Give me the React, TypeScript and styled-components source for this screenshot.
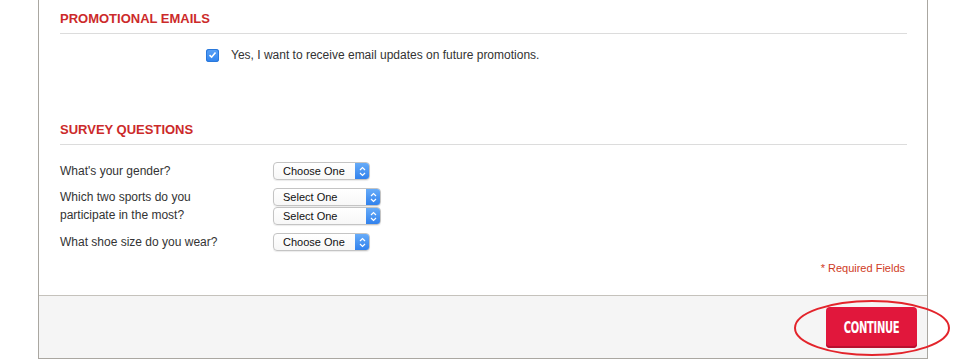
import React from "react";
import styled, { createGlobalStyle } from "styled-components";

const GlobalStyle = createGlobalStyle`
  body {
    margin: 0;
    background: #fff;
    font-family: "Liberation Sans", Arial, Helvetica, sans-serif;
    color: #333;
  }
`;

const Panel = styled.div`
  box-sizing: border-box;
  width: 890px;
  margin-left: 38px;
  border-left: 1px solid #aaa7a1;
  border-right: 1px solid #aaa7a1;
  border-bottom: 1px solid #aaa7a1;
`;

const Body = styled.div`
  padding: 11px 20px 20px 21px;
  background: #fff;
`;

const SectionTitle = styled.h2<{ $gap?: number }>`
  margin: ${(p) => p.$gap ?? 0}px 0 0;
  padding-bottom: 6px;
  border-bottom: 1px solid #dcdcdc;
  font-size: 13px;
  line-height: 16px;
  font-weight: bold;
  text-transform: uppercase;
  color: #cc2a2a;
`;

const OptInRow = styled.label`
  display: flex;
  align-items: center;
  gap: 12px;
  height: 18px;
  margin: 12px 0 0 146px;
  font-size: 12px;
`;

const CheckBox = styled.span`
  display: inline-flex;
  align-items: center;
  justify-content: center;
  width: 13px;
  height: 13px;
  border-radius: 3px;
  background: linear-gradient(#5aa2f7, #2f83ee);
  box-shadow: inset 0 0 0 1px #2a78da;
`;

const Questions = styled.div`
  display: grid;
  grid-template-columns: 213px auto;
  row-gap: 8px;
  margin-top: 17px;
`;

const Question = styled.div`
  font-size: 12px;
  line-height: 18px;
  width: 160px;
`;

const SelectStack = styled.div`
  display: flex;
  flex-direction: column;
  gap: 1px;
`;

const Select = styled.div<{ $width: number }>`
  box-sizing: border-box;
  display: flex;
  align-items: center;
  justify-content: space-between;
  width: ${(p) => p.$width}px;
  height: 18px;
  padding-left: 9px;
  border: 1px solid #c4c4c4;
  border-radius: 4px;
  background: linear-gradient(#fff, #f7f7f7);
  box-shadow: 0 1px 1px rgba(0, 0, 0, 0.08);
  font-size: 11px;
  color: #111;
  overflow: hidden;
`;

const SelectCap = styled.span`
  display: flex;
  align-items: center;
  justify-content: center;
  width: 15px;
  height: 18px;
  margin-right: -1px;
  background: linear-gradient(#6aaef9, #2e7fec);
  border-radius: 0 4px 4px 0;
`;

const Required = styled.div`
  margin: 11px 2px 0 0;
  text-align: right;
  font-size: 11px;
  line-height: 13px;
  color: #cf3a24;
`;

const Footer = styled.div`
  display: flex;
  justify-content: flex-end;
  padding: 11px 10px 10px;
  border-top: 1px solid #c5c2bc;
  background: #f5f5f5;
`;

const ButtonWrap = styled.div`
  position: relative;
`;

const ContinueButton = styled.button`
  display: flex;
  align-items: center;
  justify-content: center;
  width: 91px;
  height: 41px;
  padding: 0;
  border: none;
  border-radius: 4px;
  background: #e1173c;
  box-shadow: inset 0 -2px 0 #b8102f;
  color: #fff;
  font-family: "DejaVu Sans Condensed", "Liberation Sans Narrow", "Liberation Sans", sans-serif;
  font-weight: bold;
  font-size: 15px;
  letter-spacing: -0.4px;
  cursor: pointer;
  span {
    display: inline-block;
    transform: scaleX(0.74);
  }
`;

const Highlight = styled.svg`
  position: absolute;
  left: -33px;
  top: -8px;
  pointer-events: none;
`;

const Chevrons = () => (
  <svg width="7" height="11" viewBox="0 0 7 11">
    <path d="M1 4 L3.5 1.5 L6 4 M1 7 L3.5 9.5 L6 7" fill="none" stroke="#fff" strokeWidth="1.2" />
  </svg>
);

const Dropdown = ({ label, width }: { label: string; width: number }) => (
  <Select $width={width}>
    {label}
    <SelectCap>
      <Chevrons />
    </SelectCap>
  </Select>
);

export default function App() {
  return (
    <>
      <GlobalStyle />
      <Panel>
        <Body>
          <SectionTitle>Promotional Emails</SectionTitle>
          <OptInRow>
            <CheckBox>
              <svg width="9" height="8" viewBox="0 0 9 8">
                <path d="M1.5 4.2 L3.6 6.2 L7.5 1.5" fill="none" stroke="#fff" strokeWidth="1.6" />
              </svg>
            </CheckBox>
            Yes, I want to receive email updates on future promotions.
          </OptInRow>

          <SectionTitle $gap={58}>Survey Questions</SectionTitle>
          <Questions>
            <Question>What's your gender?</Question>
            <Dropdown label="Choose One" width={97} />
            <Question>Which two sports do you participate in the most?</Question>
            <SelectStack>
              <Dropdown label="Select One" width={108} />
              <Dropdown label="Select One" width={108} />
            </SelectStack>
            <Question>What shoe size do you wear?</Question>
            <Dropdown label="Choose One" width={97} />
          </Questions>
          <Required>* Required Fields</Required>
        </Body>
        <Footer>
          <ButtonWrap>
            <ContinueButton>
              <span>CONTINUE</span>
            </ContinueButton>
            <Highlight width="158" height="58" viewBox="0 0 158 58">
              <ellipse cx="79" cy="29" rx="77" ry="27" fill="none" stroke="#e3242b" strokeWidth="2" />
            </Highlight>
          </ButtonWrap>
        </Footer>
      </Panel>
    </>
  );
}
